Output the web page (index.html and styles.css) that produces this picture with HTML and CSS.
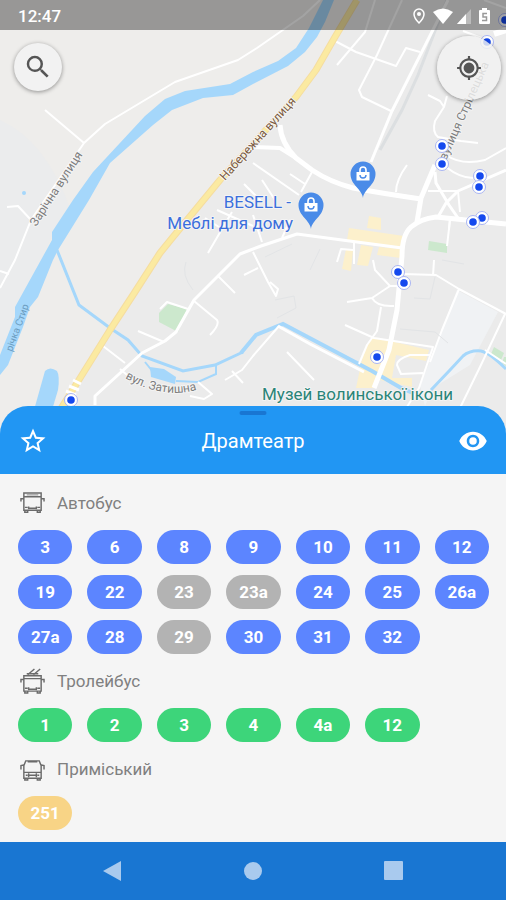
FILE: index.html
```html
<!DOCTYPE html>
<html lang="uk">
<head>
    <meta charset="UTF-8">
    <meta name="viewport" content="width=device-width, initial-scale=1.0">
    <title>Драмтеатр</title>
    <link rel="stylesheet" href="styles.css">
</head>
<body>

    <main class="map">
        <svg class="map-canvas" viewBox="0 0 506 440" preserveAspectRatio="xMidYMin slice" role="img" aria-label="Мапа">
            <defs>
                <g id="stop">
                    <circle r="6.5" fill="#fff" stroke="#a9b5f2" stroke-width="1" />
                    <circle r="3.8" fill="#1549ee" />
                </g>
                <g id="shop">
                    <path d="M0 24C-1 15-12.500 11-12.500 0A12.500 12.500 0 0 1 12.500 0C12.500 11 1 15 0 24z" fill="#4a8be8" />
                    <path d="M-6.500-2h13v8.500h-13z" fill="#fff" />
                    <path d="M-3-2v-2a3 3 0 0 1 6 0v2" fill="none" stroke="#fff" stroke-width="1.600" />
                    <path d="M-3 1a3 3 0 0 0 6 0" fill="none" stroke="#4a8be8" stroke-width="1.400" />
                </g>
                <path id="zatyshna" d="M125 378Q143 389 164 392Q183 395 202 388" />
            </defs>

            <rect width="506" height="440" fill="#ebebeb" />
            <path d="M0 0H357L335 37L296 97L203 200L160 253L110 330L50 420H0z" fill="#eeedeb" />
            <path d="M0 120Q45 140 70 208L52 236L0 355z" fill="#ebeced" />
            <path d="M457 290L498 312L470 365L433 388L425 406L420 386z" fill="#f0f2f4" />

            <!-- parks and blocks -->
            <g fill="#cce8cd">
                <path d="M168 304L187 309L178 332L159 322V313z" />
                <path d="M429 241L447 244V253L428 250z" />
                <path d="M494 347L504 353L501 360L491 354zM504 357H506V366L502 363z" />
            </g>
            <g fill="#fcf0cc">
                <path d="M369 216L381 218V230L367 228z" />
                <path d="M349 228L404 236V247L347 240z" />
                <path d="M346 249L353 250L351 271L342 269zM361 245L373 247L368 266L357 265zM379 247L402 249L401 258L377 255z" />
                <path d="M373 337L429 350L426 361L396 355L392 378L412 378V387L380 380L374 388H356L364 350z" />
            </g>

            <!-- water -->
            <g fill="#a5d7fb">
                <path d="M323 0L309 28L296 48L278 61L253 72L230 84L185 91L165 99L145 116L93 172L73 200L52 232V240L15 307V317L0 355V375L8 365L23 327L30 307L38 297L53 260L58 250L89 200L110 163L153 125L172 110L203 98L233 95L253 84L288 66L305 52L317 37L325 22L334 0z" />
                <path d="M45 371Q50 366 57 371Q60 376 58 390L52 410H34z" />
                <path d="M150 367L164 369L176 377L175 384L151 377z" />
                <circle cx="24" cy="193" r="2" />
            </g>
            <g fill="none" stroke="#a5d7fb">
                <path d="M57 250L79 305L110 328L128 340L142 356L183 371L215 365L243 352" stroke-width="3" />
                <path d="M241 353L256 335L283 324L372 371L401 388L420 396" stroke-width="4" />
                <path d="M431 390L450 370L463 356Q470 350 481 351Q490 353 506 369" stroke-width="3" />
                <path d="M145 362L153 372M176 381L198 382L216 374V365" stroke-width="2" />
            </g>

            <!-- railway -->
            <g fill="none" stroke="#dcdfe1" stroke-width="3">
                <path d="M447 0L418 75L402 110L380 150" />
            </g>

            <!-- streets -->
            <g fill="none" stroke="#fff" stroke-width="2" stroke-linejoin="round">
                <path d="M0 288L15 260L31 220L84 143L105 124L175 82L238 60L257 48L303 16L320 0" />
                <path d="M45 110L84 143M7 207L18 206L31 220M0 271L9 274" />
                <path d="M335 41L356 52L396 66L406 48L420 52" />
                <path d="M402 0L377 55L359 90L362 97L391 111" />
                <path d="M375 0L365 32L337 65" />
                <path d="M448 0L392 111L371 162" stroke-width="3" />
                <path d="M428 95L440 101L444 107L447 96M444 107L435 121Q432 132 438 137L461 141L478 143" />
                <path d="M446 155Q462 166 485 160L506 148M446 167Q460 178 473 178M396 192Q396 180 407 165" />
                <path d="M484 0L506 8M463 31L487 40" />
                <path d="M253 163L299 195M312 172L301 192M290 174L305 184M262 180L275 200M244 184L262 202M217 210L253 226" />
                <path d="M208 253L222 229L232 212M222 229L205 218M253 215L262 242M290 220L282 238" />
                <path d="M95 405V396L130 364L142 353L165 341L176 332L194 300L218 276L240 254L261 246L297 234L402 248" stroke-width="3" />
                <path d="M103 346L125 363M138 331L164 342M218 276L235 293M244 275L258 268M194 301L217 320Q220 325 210 335M160 309L167 302L188 309" />
                <path d="M120 369L133 380M232 371L243 383M198 382L212 394L204 399L190 396M225 380L242 370L253 356L279 326" />
                <path d="M253 252L268 282L276 296L278 289L270 282M287 352L314 380" />
                <path d="M278 326L310 344L364 372" stroke-width="3" />
                <path d="M354 242V264M337 262L341 249L353 250" />
                <path d="M373 260L375 270L390 286H402M390 286L372 298L347 302M372 298Q377 307 394 306M381 307L377 331L367 345L359 364" />
                <path d="M345 325L374 338L433 347L419 388L405 410M430 355L410 355Q397 359 397 365L401 374L423 373" />
                <path d="M403 274L436 275L459 289L506 314M434 260L433 276M459 289L442 330L430 362M450 220L447 246" />
                <path d="M505 314L480 367L459 410M485 350L506 364" />
            </g>
            <g fill="none" stroke="#e2e4e6" stroke-width="1">
                <path d="M265 257L292 244M320 249L310 270M400 329L435 332L448 343M442 260L464 264M414 298L430 299L435 277M275 300L294 296L296 308L277 318" />
                <path d="M186 262Q181 275 193 290" />
            </g>
            <g fill="none" stroke="#fff" stroke-linejoin="round">
                <path d="M280 125Q281 143 296 158L312 170Q330 182 353 188Q380 193 421 199" stroke-width="5" />
                <path d="M253 147L280 148L296 158" stroke-width="4" />
                <path d="M374 388L389 350L397 310L402 256Q402 235 411 227Q420 219 436 217L506 224" stroke-width="5" />
                <path d="M435 165L421 198L417 222" stroke-width="5" />
                <path d="M435 172L436 183L449 205L458 218M438 217L446 203L458 191L506 170" stroke-width="3" />
                <path d="M428 191L458 191L460 212M450 217L449 230" stroke-width="2" />
                <path d="M506 30L494 34" stroke-width="6" />
            </g>

            <!-- main road -->
            <g fill="none" stroke-linejoin="round">
                <path d="M357 0L335 37L316 70L296 97L220 180L173 237L160 253L133 295L110 330L77 383L60 410" stroke="#f5dda0" stroke-width="7" />
                <path d="M357 0L335 37L316 70L296 97L220 180L173 237L160 253L133 295L110 330L77 383L60 410" stroke="#fbeaa1" stroke-width="5" />
                <path d="M66 391L76 395M69 386L79 390M73 380L81 384" stroke="#fff" stroke-width="3" />
            </g>

            <g class="map-labels">
                <text class="label-road" transform="translate(225 181) rotate(-48)">Набережна вулиця</text>
                <text class="label-street" transform="translate(36 227) rotate(-57)">Зарічна вулиця</text>
                <text class="label-street" transform="translate(446 161) rotate(-66)">вулиця Стрілецька</text>
                <text class="label-street"><textPath href="#zatyshna">вул. Затишна</textPath></text>
                <text class="label-river" transform="translate(12 352) rotate(-70)">річка Стир</text>
                <text class="label-shop" x="291" y="208">BESELL -</text>
                <text class="label-shop" x="293" y="229">Меблі для дому</text>
                <text class="label-museum" x="262" y="400">Музей волинської ікони</text>
            </g>

            <use href="#shop" x="363" y="174" />
            <use href="#shop" x="311" y="205" />

            <use href="#stop" x="487" y="42" />
            <use href="#stop" x="505" y="20" />
            <use href="#stop" x="442" y="146" />
            <use href="#stop" x="442" y="164" />
            <use href="#stop" x="480" y="176" />
            <use href="#stop" x="479" y="187" />
            <use href="#stop" x="482" y="218" />
            <use href="#stop" x="473" y="222" />
            <use href="#stop" x="398" y="272" />
            <use href="#stop" x="404" y="283" />
            <use href="#stop" x="377" y="357" />
            <use href="#stop" x="71" y="400" />
        </svg>

        <div class="status-bar">
            <span class="time">12:47</span>
            <div class="status-icons">
                <svg width="12" height="18" viewBox="0 0 12 18">
                    <path d="M6 2a5 5 0 0 0-5 5c0 4 5 9 5 9s5-5 5-9a5 5 0 0 0-5-5z" fill="none" stroke="#fff" stroke-width="1.500" />
                    <circle cx="6" cy="7" r="2" fill="#fff" />
                </svg>
                <svg width="20" height="18" viewBox="0 0 20 18">
                    <path d="M0 5Q10-2 20 5L10 17z" fill="#fff" />
                </svg>
                <svg width="14" height="18" viewBox="0 0 14 18">
                    <path d="M14 2V17H0z" fill="#bbb" />
                    <path d="M9 7V17H0z" fill="#fff" />
                </svg>
                <svg width="11" height="18" viewBox="0 0 11 18">
                    <path d="M3 1h5v2h2q1 0 1 1v12q0 1-1 1H1q-1 0-1-1V4q0-1 1-1h2z" fill="#fff" />
                    <path d="M8 6.500H4v3.500h3.500v3.500H3" fill="none" stroke="#999" stroke-width="1.500" />
                </svg>
            </div>
        </div>

        <button class="map-button search" type="button" aria-label="Пошук">
            <svg width="30" height="30" viewBox="0 0 24 24" fill="#555">
                <path d="M15.500 14h-.79l-.28-.27A6.470 6.470 0 0 0 16 9.500 6.500 6.500 0 1 0 9.500 16c1.610 0 3.090-.59 4.230-1.570l.27.28v.79l5 4.990L20.490 19l-4.990-5zm-6 0C7.010 14 5 11.990 5 9.500S7.010 5 9.500 5 14 7.010 14 9.500 11.990 14 9.500 14z" />
            </svg>
        </button>
        <button class="map-button locate" type="button" aria-label="Моє місце">
            <svg width="26" height="26" viewBox="0 0 24 24" fill="#555">
                <path d="M12 7a5 5 0 1 0 0 10 5 5 0 0 0 0-10zm8.940 4A8.994 8.994 0 0 0 13 3.060V1h-2v2.060A8.994 8.994 0 0 0 3.060 11H1v2h2.060A8.994 8.994 0 0 0 11 20.940V23h2v-2.060A8.994 8.994 0 0 0 20.940 13H23v-2h-2.060zM12 19c-3.870 0-7-3.130-7-7s3.130-7 7-7 7 3.130 7 7-3.130 7-7 7z" />
            </svg>
        </button>
    </main>

    <section class="sheet">
        <header class="sheet-header">
            <span class="handle"></span>
            <button class="icon-button" type="button" aria-label="Додати в обране">
                <svg width="30" height="30" viewBox="0 0 24 24" fill="#fff">
                    <path d="M22 9.240l-7.190-.62L12 2 9.190 8.630 2 9.240l5.460 4.730L5.820 21 12 17.270 18.180 21l-1.630-7.030L22 9.240zM12 15.400l-3.760 2.270 1-4.280-3.320-2.880 4.380-.38L12 6.100l1.710 4.040 4.380.38-3.320 2.880 1 4.280L12 15.400z" />
                </svg>
            </button>
            <h1 class="stop-name">Драмтеатр</h1>
            <button class="icon-button" type="button" aria-label="Показати на мапі">
                <svg width="30" height="30" viewBox="0 0 24 24" fill="#fff">
                    <path d="M12 4.500C7 4.500 2.730 7.610 1 12c1.730 4.390 6 7.500 11 7.500s9.270-3.110 11-7.500c-1.730-4.390-6-7.500-11-7.500zM12 17c-2.760 0-5-2.240-5-5s2.240-5 5-5 5 2.240 5 5-2.240 5-5 5zm0-8a3 3 0 1 0 0 6 3 3 0 0 0 0-6z" />
                </svg>
            </button>
        </header>

        <div class="routes">
            <h2 class="route-type">
                <svg class="route-icon" viewBox="0 0 26 28">
                    <path d="M4 3h18v18H4zM4 7h18M1 12V9h3M25 12V9h-3M5 21v2h3v-2M18 21v2h3v-2" />
                    <path d="M7 5h12" stroke="#aaa" />
                    <path d="M5 18h3M18 18h3M9 17v3M17 17v3M9 19h8" />
                </svg>
                Автобус
            </h2>
            <div class="chips bus">
                <button class="chip">3</button>
                <button class="chip">6</button>
                <button class="chip">8</button>
                <button class="chip">9</button>
                <button class="chip">10</button>
                <button class="chip">11</button>
                <button class="chip">12</button>
                <button class="chip">19</button>
                <button class="chip">22</button>
                <button class="chip off">23</button>
                <button class="chip off">23а</button>
                <button class="chip">24</button>
                <button class="chip">25</button>
                <button class="chip">26а</button>
                <button class="chip">27а</button>
                <button class="chip">28</button>
                <button class="chip off">29</button>
                <button class="chip">30</button>
                <button class="chip">31</button>
                <button class="chip">32</button>
            </div>

            <h2 class="route-type">
                <svg class="route-icon" viewBox="0 0 26 28">
                    <path d="M4 8h18v16H4zM4 11h18M1 15v-3h3M25 15v-3h-3M5 24v2h3v-2M18 24v2h3v-2" />
                    <path d="M5 21h3M18 21h3M9 20v3M17 20v3M9 22h8M8 7l7-6M14 7l7-6M7 6h12" />
                </svg>
                Тролейбус
            </h2>
            <div class="chips trolleybus">
                <button class="chip">1</button>
                <button class="chip">2</button>
                <button class="chip">3</button>
                <button class="chip">4</button>
                <button class="chip">4а</button>
                <button class="chip">12</button>
            </div>

            <h2 class="route-type">
                <svg class="route-icon" viewBox="0 0 26 28">
                    <path d="M6 5h14l2 5v13H4V10zM4 17h18M1 14v-4l4-1M25 14v-4l-4-1M5 23v2h3v-2M18 23v2h3v-2" />
                    <path d="M8 6h10M9 18v4M17 18v4M9 20h8M6 20h2M18 20h2" />
                </svg>
                Приміський
            </h2>
            <div class="chips suburban">
                <button class="chip">251</button>
            </div>
        </div>
    </section>

    <nav class="nav-bar">
        <button class="nav-button" type="button" aria-label="Назад">
            <svg width="20" height="20" viewBox="0 0 20 20"><path d="M19 0V20L1 10z" /></svg>
        </button>
        <button class="nav-button" type="button" aria-label="Додому">
            <svg width="20" height="20" viewBox="0 0 20 20"><circle cx="10" cy="10" r="9" /></svg>
        </button>
        <button class="nav-button" type="button" aria-label="Огляд">
            <svg width="20" height="20" viewBox="0 0 20 20"><rect width="19" height="19" rx="1" /></svg>
        </button>
    </nav>

</body>
</html>
```
FILE: styles.css
```css
* {
    box-sizing: border-box;
}

body {
    display: flex;
    flex-direction: column;
    min-height: 100vh;
    margin: 0;
    background: #f5f5f5;
    font-family: Roboto, "Noto Sans", sans-serif;
}

button {
    padding: 0;
    border: none;
    background: none;
    font-family: inherit;
    cursor: pointer;
}

svg {
    display: block;
}

/* map */
.map {
    position: relative;
    flex: 1;
    min-height: 240px;
    overflow: hidden;
    background: #ebebeb;
}

.map-canvas {
    position: absolute;
    inset: 0;
    width: 100%;
    height: 100%;
}

.map-labels {
    paint-order: stroke;
    stroke: #f4f4f4;
    stroke-width: 2px;
    stroke-linejoin: round;
}

.label-road {
    font-size: 12px;
    fill: #7b5a3c;
}

.label-street {
    font-size: 12px;
    fill: #7d7d7d;
}

.label-river {
    font-size: 10px;
    fill: #6b9cc0;
    stroke: none;
}

.label-shop {
    font-size: 17px;
    fill: #3b6fdc;
    text-anchor: end;
}

.label-museum {
    font-size: 17px;
    fill: #2a8478;
}

.status-bar {
    position: relative;
    display: flex;
    align-items: center;
    justify-content: space-between;
    height: 30px;
    padding: 2px 16px 0 18px;
    background: rgba(0, 0, 0, 0.36);
    color: #fff;
}

.time {
    font-size: 17px;
    font-weight: 500;
}

.status-icons {
    display: flex;
    align-items: center;
    gap: 8px;
}

.status-icons svg:nth-child(3) {
    margin-left: -4px;
}

.map-button {
    position: absolute;
    display: flex;
    align-items: center;
    justify-content: center;
    border-radius: 50%;
    box-shadow: 0 1px 4px rgba(0, 0, 0, 0.4);
}

.search {
    top: 43px;
    left: 14px;
    width: 48px;
    height: 48px;
    background: #f2f2f2;
}

.locate {
    top: 36px;
    right: 5px;
    width: 64px;
    height: 64px;
    background: rgba(242, 242, 242, 0.82);
}

/* bottom sheet */
.sheet {
    position: relative;
    margin-top: -34px;
}

.sheet-header {
    position: relative;
    display: flex;
    align-items: center;
    justify-content: space-between;
    height: 68px;
    padding: 2px 18px 0;
    border-radius: 28px 28px 0 0;
    background: #2196f3;
    color: #fff;
}

.handle {
    position: absolute;
    top: 5px;
    left: 50%;
    width: 27px;
    height: 4px;
    border-radius: 2px;
    background: #1976d2;
    transform: translateX(-50%);
}

.icon-button {
    display: flex;
    align-items: center;
    justify-content: center;
    width: 30px;
    height: 30px;
}

.stop-name {
    margin: 0;
    font-size: 20px;
    font-weight: 400;
}

.routes {
    padding: 2px 17px 12px 18px;
    background: #f5f5f5;
}

.route-type {
    display: flex;
    align-items: center;
    gap: 12px;
    height: 54px;
    margin: 0;
    padding-left: 2px;
    font-size: 17px;
    font-weight: 400;
    color: #808080;
}

.route-icon {
    width: 25px;
    height: 27px;
    fill: none;
    stroke: #6b6b6b;
    stroke-width: 1.5px;
}

.chips {
    display: grid;
    grid-template-columns: repeat(7, 1fr);
    gap: 11px 15px;
}

.chip {
    height: 34px;
    border-radius: 17px;
    font-size: 17px;
    font-weight: 700;
    color: #fff;
}

.bus .chip {
    background: #5c85ff;
}

.trolleybus .chip {
    background: #3dd57a;
}

.suburban .chip {
    background: #f8d486;
}

.chips .off {
    background: #b3b3b3;
}

/* system navigation */
.nav-bar {
    display: grid;
    grid-template-columns: repeat(3, 1fr);
    height: 58px;
    padding: 0 42px;
    background: #1976d2;
}

.nav-button {
    display: flex;
    align-items: center;
    justify-content: center;
}

.nav-button svg {
    fill: #a9caee;
}
```
